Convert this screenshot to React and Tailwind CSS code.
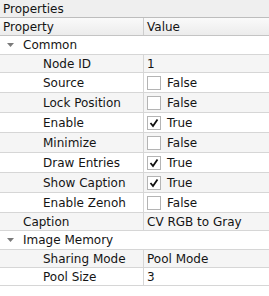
import React from "react";

const rows = [
  { type: "group", label: "Common", h: "h-[19px]" },
  { label: "Node ID", value: "1", indent: true, h: "h-[18px]" },
  { label: "Source", check: false, indent: true },
  { label: "Lock Position", check: false, indent: true },
  { label: "Enable", check: true, indent: true },
  { label: "Minimize", check: false, indent: true },
  { label: "Draw Entries", check: true, indent: true },
  { label: "Show Caption", check: true, indent: true },
  { label: "Enable Zenoh", check: false, indent: true },
  { label: "Caption", value: "CV RGB to Gray", h: "h-[18px]" },
  { type: "group", label: "Image Memory", h: "h-[19px]" },
  { label: "Sharing Mode", value: "Pool Mode", indent: true, h: "h-[18px]" },
  { label: "Pool Size", value: "3", indent: true, h: "h-[18px]" },
];

function Arrow() {
  return (
    <svg width="7" height="4" viewBox="0 0 7 4" className="ml-[7px] mr-[9px]">
      <path d="M0 0 L7 0 L3.5 4 Z" fill="#7a7a7a" />
    </svg>
  );
}

function CheckBox({ checked }) {
  return (
    <div className="w-[14px] h-[14px] border border-[#b4b4b4] bg-white flex items-center justify-center mr-[6px]">
      {checked && (
        <svg width="10" height="10" viewBox="0 0 10 10">
          <path d="M1.5 5 L4 8 L8.5 1.5" fill="none" stroke="#111" strokeWidth="1.8" />
        </svg>
      )}
    </div>
  );
}

export default function App() {
  return (
    <div
      className="w-[269px] h-[296px] bg-white text-[12px] text-[#141414] overflow-hidden leading-none"
      style={{ fontFamily: '"DejaVu Sans", sans-serif' }}
    >
      {/* dock title */}
      <div className="h-[18px] bg-[#efefef] border-b border-[#bdbdbd] flex items-center px-[3px]">
        Properties
      </div>
      {/* header */}
      <div className="h-[18px] flex bg-gradient-to-b from-[#fafafa] to-[#ececec] border-b border-[#c4c4c4]">
        <div className="w-[144px] border-r border-[#cdcdcd] flex items-center px-[3px]">Property</div>
        <div className="flex-1 flex items-center px-[3px]">Value</div>
      </div>
      {rows.map((r, i) => {
        const odd = i % 2 === 1;
        const bg = odd ? "bg-[#f5f5f5]" : "bg-white";
        if (r.type === "group") {
          return (
            <div key={i} className={`${r.h} flex items-center border-b border-[#d6d6d6] ${bg}`}>
              <Arrow />
              <span>{r.label}</span>
            </div>
          );
        }
        return (
          <div key={i} className={`${r.h || "h-[20px]"} flex border-b border-[#d6d6d6] ${bg}`}>
            <div
              className={`w-[144px] border-r border-[#d6d6d6] flex items-center ${
                r.indent ? "pl-[43px]" : "pl-[23px]"
              }`}
            >
              {r.label}
            </div>
            <div className="flex-1 flex items-center pl-[3px]">
              {r.check !== undefined ? (
                <>
                  <CheckBox checked={r.check} />
                  <span>{r.check ? "True" : "False"}</span>
                </>
              ) : (
                r.value
              )}
            </div>
          </div>
        );
      })}
    </div>
  );
}
